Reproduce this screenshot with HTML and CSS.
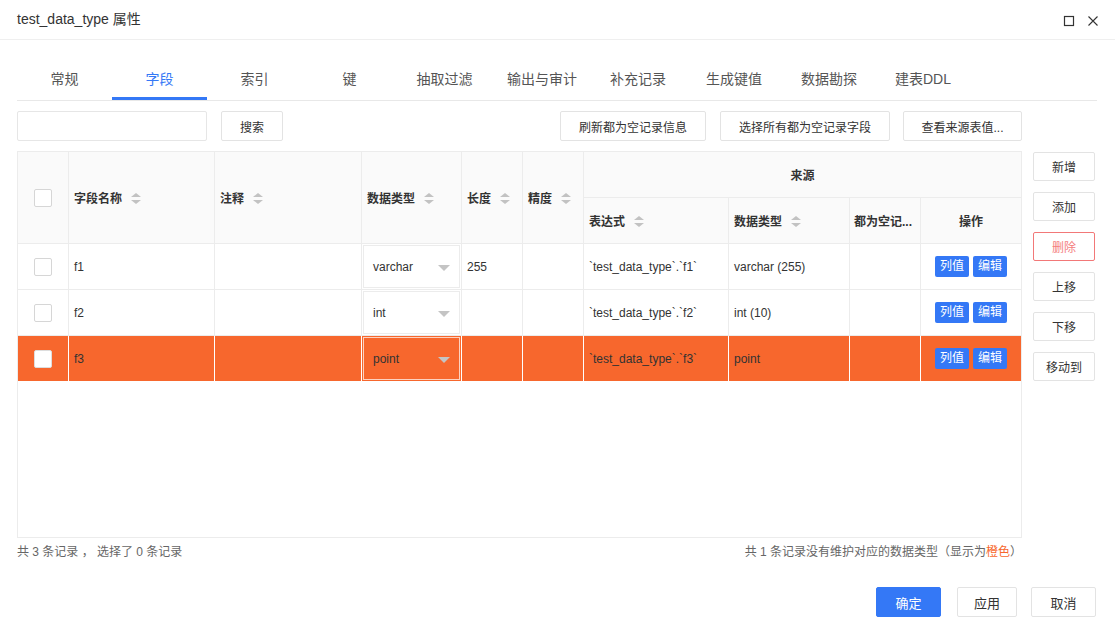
FILE: index.html
```html
<!DOCTYPE html>
<html lang="zh">
<head>
<meta charset="utf-8">
<title>test_data_type 属性</title>
<link rel="stylesheet" href="styles.css">
</head>
<body>
<div class="dialog">
  <div class="header">
    <div class="title">test_data_type 属性</div>
    <div class="win-icons">
      <svg width="12" height="12" viewBox="0 0 12 12"><rect x="1.5" y="1.5" width="9" height="9" fill="none" stroke="#333" stroke-width="1.2"/></svg>
      <svg width="12" height="12" viewBox="0 0 12 12"><path d="M1.5 1.5 L10.5 10.5 M10.5 1.5 L1.5 10.5" stroke="#333" stroke-width="1.1" fill="none"/></svg>
    </div>
  </div>

  <div class="content">
    <div class="tabs">
      <div class="tab w95">常规</div>
      <div class="tab w95 active">字段</div>
      <div class="tab w95">索引</div>
      <div class="tab w95">键</div>
      <div class="tab w95">抽取过滤</div>
      <div class="tab w100">输出与审计</div>
      <div class="tab w92">补充记录</div>
      <div class="tab w100">生成键值</div>
      <div class="tab w90">数据勘探</div>
      <div class="tab w98">建表DDL</div>
    </div>

    <div class="toolbar">
      <input class="search-input" type="text">
      <button class="btn btn-search">搜索</button>
      <div class="spacer"></div>
      <button class="btn btn-t1">刷新都为空记录信息</button>
      <button class="btn btn-t2">选择所有都为空记录字段</button>
      <button class="btn btn-t3">查看来源表值...</button>
    </div>

    <div class="main">
      <div class="grid-wrap">
        <table class="grid">
          <colgroup>
            <col class="w-chk"><col class="w-name"><col class="w-note"><col class="w-type"><col class="w-len"><col class="w-prec"><col class="w-expr"><col class="w-stype"><col class="w-null"><col class="w-op">
          </colgroup>
          <thead>
            <tr class="h1">
              <th rowspan="2" class="c-chk"><span class="chk"></span></th>
              <th rowspan="2">字段名称<span class="sort"></span></th>
              <th rowspan="2">注释<span class="sort"></span></th>
              <th rowspan="2">数据类型<span class="sort"></span></th>
              <th rowspan="2">长度<span class="sort"></span></th>
              <th rowspan="2">精度<span class="sort"></span></th>
              <th colspan="4" class="center">来源</th>
            </tr>
            <tr class="h2">
              <th>表达式<span class="sort"></span></th>
              <th>数据类型<span class="sort"></span></th>
              <th class="tight">都为空记...</th>
              <th class="center">操作</th>
            </tr>
          </thead>
          <tbody>
            <tr>
              <td class="c-chk"><span class="chk"></span></td>
              <td>f1</td>
              <td></td>
              <td class="c-sel"><div class="sel">varchar<span class="caret"></span></div></td>
              <td>255</td>
              <td></td>
              <td>`test_data_type`.`f1`</td>
              <td>varchar (255)</td>
              <td></td>
              <td class="center"><span class="op">列值</span><span class="op">编辑</span></td>
            </tr>
            <tr>
              <td class="c-chk"><span class="chk"></span></td>
              <td>f2</td>
              <td></td>
              <td class="c-sel"><div class="sel">int<span class="caret"></span></div></td>
              <td></td>
              <td></td>
              <td>`test_data_type`.`f2`</td>
              <td>int (10)</td>
              <td></td>
              <td class="center"><span class="op">列值</span><span class="op">编辑</span></td>
            </tr>
            <tr class="warn">
              <td class="c-chk"><span class="chk"></span></td>
              <td>f3</td>
              <td></td>
              <td class="c-sel"><div class="sel">point<span class="caret"></span></div></td>
              <td></td>
              <td></td>
              <td>`test_data_type`.`f3`</td>
              <td>point</td>
              <td></td>
              <td class="center"><span class="op">列值</span><span class="op">编辑</span></td>
            </tr>
          </tbody>
        </table>
      </div>
      <div class="side">
        <button class="btn side-btn">新增</button>
        <button class="btn side-btn">添加</button>
        <button class="btn side-btn danger">删除</button>
        <button class="btn side-btn">上移</button>
        <button class="btn side-btn">下移</button>
        <button class="btn side-btn">移动到</button>
      </div>
    </div>

    <div class="status">
      <span>共 3 条记录 ， 选择了 0 条记录</span>
      <span class="status-right">共 1 条记录没有维护对应的数据类型（显示为<em class="orange">橙色</em>）</span>
    </div>

    <div class="footer">
      <button class="btn btn-primary">确定</button>
      <button class="btn btn-apply">应用</button>
      <button class="btn btn-cancel">取消</button>
    </div>
  </div>
</div>
</body>
</html>
```

FILE: styles.css
```css
* { box-sizing: border-box; }
html, body { margin: 0; padding: 0; background: #fff; }
body {
  font-family: "Liberation Sans", "Noto Sans CJK SC", sans-serif;
  font-size: 12px;
  color: #333;
  width: 1115px;
  height: 625px;
  overflow: hidden;
}
.dialog { width: 1115px; height: 625px; }

.header {
  height: 40px;
  border-bottom: 1px solid #efefef;
  display: flex;
  align-items: center;
  padding: 0 16px 0 17px;
}
.title { font-size: 14px; color: #333; flex: 1; margin-top: -4px; }
.win-icons { display: flex; gap: 12px; align-items: center; margin-top: 2px; }
.win-icons svg { display: block; }

.content { padding: 0 18px 0 17px; }

.tabs {
  margin-top: 20px;
  display: flex;
  border-bottom: 1px solid #e8e8e8;
  height: 41px;
}
.tab {
  text-align: center;
  font-size: 14px;
  color: #555;
  line-height: 39px;
  border-bottom: 3px solid transparent;
}
.tab.w95 { width: 95px; }
.tab.w100 { width: 100px; }
.tab.w92 { width: 92px; }
.tab.w90 { width: 90px; }
.tab.w98 { width: 98px; }
.tab.active { color: #3478f6; border-bottom-color: #3478f6; }

.toolbar {
  width: 1005px;
  display: flex;
  align-items: center;
  margin-top: 10px;
  height: 30px;
}
.spacer { flex: 1; }
.search-input {
  width: 190px;
  height: 30px;
  border: 1px solid #e6e6e6;
  border-radius: 2px;
  outline: none;
  padding: 0 6px;
}
.btn {
  font-family: "Liberation Sans", "Noto Sans CJK SC", sans-serif;
  font-size: 12px;
  color: #333;
  background: #fff;
  border: 1px solid #e3e3e3;
  border-radius: 2px;
  height: 30px;
  padding: 0;
  cursor: pointer;
}
.btn-search { width: 62px; margin-left: 14px; }
.btn-t1 { width: 146px; }
.btn-t2 { width: 170px; margin-left: 14px; }
.btn-t3 { width: 119px; margin-left: 13px; }

.main { display: flex; margin-top: 10px; }
.grid-wrap {
  width: 1005px;
  height: 387px;
  border: 1px solid #ececec;
  overflow: hidden;
}
.grid {
  border-collapse: collapse;
  table-layout: fixed;
  width: 1004px;
  margin: -1px 0 0 -1px;
}
.w-chk { width: 51px; }
.w-name { width: 146px; }
.w-note { width: 147px; }
.w-type { width: 100px; }
.w-len { width: 61px; }
.w-prec { width: 61px; }
.w-expr { width: 145px; }
.w-stype { width: 121px; }
.w-null { width: 71px; }
.w-op { width: 101px; }

.grid th, .grid td {
  border: 1px solid #ececec;
  height: 46px;
  padding: 0 5px;
  text-align: left;
  white-space: nowrap;
  overflow: hidden;
}
.grid thead th {
  background: #fafafa;
  font-weight: bold;
  color: #333;
  font-size: 12px;
}
.grid thead tr.h1 th, .grid thead tr.h2 th { height: 46px; }
.grid .center { text-align: center; }
.grid .tight { padding: 0 4px; }
.c-chk { text-align: center !important; padding: 0 !important; }
.chk {
  display: inline-block;
  width: 18px;
  height: 18px;
  border: 1px solid #d6d6d6;
  border-radius: 2px;
  background: #fff;
  vertical-align: middle;
}
.sort {
  display: inline-block;
  width: 9px;
  height: 11px;
  margin-left: 9px;
  vertical-align: -1px;
  position: relative;
}
.sort::before, .sort::after {
  content: "";
  position: absolute;
  left: 0;
  border-left: 5px solid transparent;
  border-right: 5px solid transparent;
}
.sort::before { top: 0; border-bottom: 4px solid #c2c2c2; }
.sort::after { bottom: 0; border-top: 4px solid #c2c2c2; }

.grid tbody td { color: #333; background: #fff; height: 46px; }
.c-sel { padding: 0 !important; }
.sel {
  margin: 1px;
  height: 43px;
  border: 1px solid #ececec;
  display: flex;
  align-items: center;
  padding: 0 9px;
  position: relative;
}
.caret {
  position: absolute;
  right: 9px;
  top: 19px;
  border-left: 6px solid transparent;
  border-right: 6px solid transparent;
  border-top: 6px solid #c4c4c4;
}
.op {
  display: inline-block;
  background: #3478f6;
  color: #fff;
  height: 21px;
  line-height: 21px;
  padding: 0 5px;
  border-radius: 2px;
  font-size: 12px;
  margin: 0 2px;
}

.grid tbody tr.warn td {
  background: #f7672d;
  border-color: #fff;
  border-top-color: #f7672d;
}
.grid tbody tr.warn td:first-child { border-left-color: #ececec; }
.grid tbody tr.warn .sel { border-color: rgba(255,255,255,0.7); }
.grid tbody tr.warn .chk { border-color: #ddd; }

.side {
  margin-left: 11px;
  display: flex;
  flex-direction: column;
  gap: 11px;
  padding-top: 1px;
}
.side-btn { width: 62px; height: 29px; }
.side-btn.danger { border-color: #f27878; color: #f47d7d; }

.status {
  width: 1005px;
  display: flex;
  justify-content: space-between;
  color: #666;
  margin-top: 6px;
  line-height: 16px;
}
.orange { color: #f7672d; font-style: normal; }

.footer {
  display: flex;
  justify-content: flex-end;
  margin-top: 27px;
  padding-right: 1px;
}
.footer .btn { height: 30px; font-size: 13px; }
.btn-primary { width: 65px; background: #3478f6; border-color: #3478f6; color: #fff; }
.btn-apply { width: 60px; margin-left: 16px; }
.btn-cancel { width: 65px; margin-left: 14px; }
```
